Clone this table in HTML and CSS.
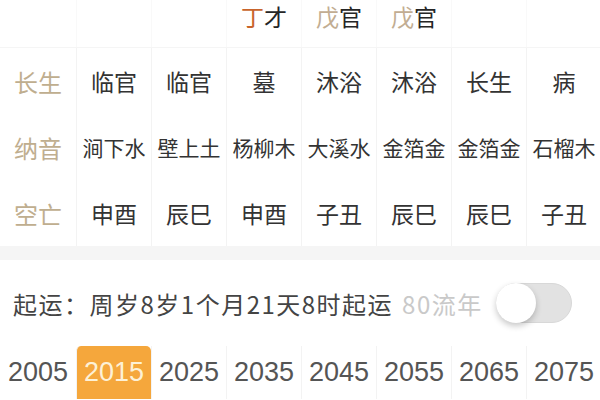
FILE: index.html
```html
<!DOCTYPE html>
<html lang="zh-CN">
<head>
<meta charset="utf-8">
<link rel="stylesheet" href="styles.css">
</head>
<body>
<div class="page">
  <div class="grid top">
    <div class="cell"></div>
    <div class="cell"></div>
    <div class="cell"></div>
    <div class="cell"><span class="ding">丁</span>才</div>
    <div class="cell"><span class="wu">戊</span>官</div>
    <div class="cell"><span class="wu">戊</span>官</div>
    <div class="cell"></div>
    <div class="cell"></div>
  </div>
  <div class="grid row">
    <div class="cell label">长生</div>
    <div class="cell">临官</div>
    <div class="cell">临官</div>
    <div class="cell">墓</div>
    <div class="cell">沐浴</div>
    <div class="cell">沐浴</div>
    <div class="cell">长生</div>
    <div class="cell">病</div>
  </div>
  <div class="grid row nayin">
    <div class="cell label">纳音</div>
    <div class="cell">涧下水</div>
    <div class="cell">壁上土</div>
    <div class="cell">杨柳木</div>
    <div class="cell">大溪水</div>
    <div class="cell">金箔金</div>
    <div class="cell">金箔金</div>
    <div class="cell">石榴木</div>
  </div>
  <div class="grid row">
    <div class="cell label">空亡</div>
    <div class="cell">申酉</div>
    <div class="cell">辰巳</div>
    <div class="cell">申酉</div>
    <div class="cell">子丑</div>
    <div class="cell">辰巳</div>
    <div class="cell">辰巳</div>
    <div class="cell">子丑</div>
  </div>
  <div class="band"></div>
  <div class="qiyun">
    <span class="qy-text">起运：周岁8岁1个月21天8时起运</span>
    <span class="liunian">80流年</span>
    <span class="toggle"><span class="knob"></span></span>
  </div>
  <div class="grid years">
    <div class="cell">2005</div>
    <div class="cell active">2015</div>
    <div class="cell">2025</div>
    <div class="cell">2035</div>
    <div class="cell">2045</div>
    <div class="cell">2055</div>
    <div class="cell">2065</div>
    <div class="cell">2075</div>
  </div>
</div>
</body>
</html>
```
FILE: styles.css
```css
html, body {
  margin: 0;
  padding: 0;
  background: #ffffff;
}
body {
  font-family: "Noto Sans CJK SC", "Noto Sans", sans-serif;
  color: #333333;
  width: 600px;
  height: 400px;
  overflow: hidden;
}
.page {
  display: flex;
  flex-direction: column;
}
.grid {
  display: grid;
  grid-template-columns: 76px repeat(7, 75px);
}
.cell {
  display: flex;
  align-items: center;
  justify-content: center;
  border-left: 1px solid #f3f3f3;
  white-space: nowrap;
}
.cell:first-child {
  border-left: none;
}
.top {
  height: 47px;
  border-bottom: 1px solid #f5f5f5;
}
.top .cell {
  align-items: flex-start;
  font-size: 23px;
  line-height: 30px;
  padding-top: 1px;
  color: #262626;
  border-left-color: #f9f9f9;
}
.ding {
  color: #c8642c;
}
.wu {
  color: #c2ad92;
}
.row {
  height: 66px;
  font-size: 23px;
  color: #333;
}
.row .label {
  color: #bfae8f;
  font-size: 24px;
}
.nayin .cell {
  font-size: 21px;
}
.nayin .label {
  font-size: 24px;
}
.band {
  height: 14px;
  background: #f5f5f5;
}
.qiyun {
  height: 86px;
  display: flex;
  align-items: center;
  padding-left: 13px;
  font-size: 24px;
  color: #444;
}
.qy-text {
  letter-spacing: 1.5px;
}
.liunian {
  color: #c9c9c9;
  margin-left: 9px;
  letter-spacing: 1.5px;
}
.toggle {
  position: relative;
  width: 76px;
  height: 40px;
  margin-left: 13px;
  border-radius: 20px;
  background: #e2e2e2;
  border: 1px solid #d8d8d8;
  box-sizing: border-box;
}
.knob {
  position: absolute;
  left: -1px;
  top: -1px;
  width: 40px;
  height: 40px;
  border-radius: 50%;
  background: #ffffff;
  box-shadow: 0 3px 6px rgba(0, 0, 0, 0.22);
}
.years {
  height: 53px;
  font-family: "Liberation Sans", "Noto Sans", sans-serif;
  font-size: 27px;
  color: #555;
}
.years .active {
  background: #f5a73c;
  color: #fdf1d6;
  border-radius: 5px 5px 0 0;
}
```
